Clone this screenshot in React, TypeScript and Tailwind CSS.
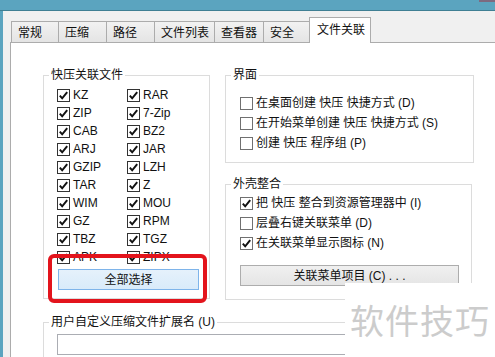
import React from 'react';

const FONT = { fontFamily: '"Liberation Sans", "Noto Sans CJK SC", sans-serif' };

const tabs = ['常规', '压缩', '路径', '文件列表', '查看器', '安全'];
const tabWidths = ['w-[47px]', 'w-[48px]', 'w-[48px]', 'w-[60px]', 'w-[49px]', 'w-[46px]'];

const leftTypes = ['KZ', 'ZIP', 'CAB', 'ARJ', 'GZIP', 'TAR', 'WIM', 'GZ', 'TBZ', 'APK'];
const rightTypes = ['RAR', '7-Zip', 'BZ2', 'JAR', 'LZH', 'Z', 'MOU', 'RPM', 'TGZ', 'ZIPX'];

function Box({ checked, light }: { checked?: boolean; light?: boolean }) {
  return (
    <svg width="13" height="13" viewBox="0 0 13 13" className="shrink-0">
      <rect x="0.5" y="0.5" width="12" height="12" fill="#fff" stroke={light ? '#707070' : '#333'} />
      {checked && <path d="M2.8 6.6 L5.2 9.3 L10.2 3.2" fill="none" stroke="#111" strokeWidth="2" />}
    </svg>
  );
}

function Row({ label, checked, light, wide }: { label: string; checked?: boolean; light?: boolean; wide?: boolean }) {
  return (
    <div className={`flex items-center gap-[3px] ${wide ? 'h-[20px]' : 'h-[18px]'}`}>
      <Box checked={checked} light={light} />
      <span className="text-[12px] text-[#111] whitespace-nowrap">{label}</span>
    </div>
  );
}

export default function App() {
  return (
    <div className="relative w-[495px] h-[357px] overflow-hidden bg-[#f0f0f0] text-[#111]" style={FONT}>
      {/* title bar */}
      <div className="h-[11px] bg-[#5ba4bf] border-b border-[#3f7f93] flex justify-end">
        <div className="w-[16px] h-[2px] bg-[#7d6a80]" />
      </div>

      <div className="flex">
        <div className="w-[3px] h-[346px] bg-[#5ba4bf]" />
        <div className="flex-1 pl-[7px] pt-[6px]">
          {/* tabs */}
          <div className="flex items-end h-[25px] pl-[1px]">
            {tabs.map((t, i) => (
              <div
                key={t}
                className={`${tabWidths[i]} h-[21px] border border-b-0 border-r-0 border-[#acacac] bg-gradient-to-b from-[#f2f2f2] to-[#e4e4e4] pl-[6px] pt-[2px] text-[12px] whitespace-nowrap`}
              >
                {t}
              </div>
            ))}
            <div className="relative z-10 -mb-[1px] w-[62px] h-[26px] border border-b-0 border-[#acacac] bg-white pl-[7px] pt-[3px] text-[12px]">
              文件关联
            </div>
          </div>

          {/* panel */}
          <div className="bg-white border-t border-l border-[#acacac] h-[320px] pl-[32px] pt-[24px] flex gap-[15px]">
            {/* left column */}
            <div className="flex flex-col w-[167px]">
              <fieldset className="border border-[#dcdcdc] pl-[5px]">
                <legend className="px-[2px] text-[12px] leading-[16px]">快压关联文件</legend>
                <div className="pl-[8px] pt-[3px]">
                  <div className="flex">
                    <div className="w-[70px]">
                      {leftTypes.map(t => <Row key={t} label={t} checked />)}
                    </div>
                    <div>
                      {rightTypes.map(t => <Row key={t} label={t} checked />)}
                    </div>
                  </div>
                  <button className="mt-[3px] mb-[8px] ml-[1px] w-[141px] h-[21px] border border-[#7eb4ea] bg-gradient-to-b from-[#e5f1fb] to-[#d9ebfa] text-[12px] text-[#111]">
                    全部选择
                  </button>
                </div>
              </fieldset>

              <fieldset className="mt-[15px] border border-[#dcdcdc] pl-[5px] w-[330px] h-[60px]">
                <legend className="px-[2px] text-[12px] leading-[16px]">用户自定义压缩文件扩展名 (U)</legend>
                <div className="pl-[8px] pt-[4px]">
                  <div className="w-[300px] h-[21px] border border-[#abadb3] bg-white" />
                </div>
              </fieldset>
            </div>

            {/* right column */}
            <div className="flex flex-col w-[249px]">
              <fieldset className="border border-[#dcdcdc] pl-[5px]">
                <legend className="px-[2px] text-[12px] leading-[16px]">界面</legend>
                <div className="pl-[9px] pt-[10px] pb-[9px]">
                  <Row label="在桌面创建 快压 快捷方式 (D)" light wide />
                  <Row label="在开始菜单创建 快压 快捷方式 (S)" light wide />
                  <Row label="创建 快压 程序组 (P)" light wide />
                </div>
              </fieldset>

              <fieldset className="mt-[13px] w-[247px] border border-[#dcdcdc] pl-[5px]">
                <legend className="px-[2px] text-[12px] leading-[16px]">外壳整合</legend>
                <div className="pl-[9px] pt-[1px] pb-[12px]">
                  <Row label="把 快压 整合到资源管理器中 (I)" checked light wide />
                  <Row label="层叠右键关联菜单 (D)" light wide />
                  <Row label="在关联菜单显示图标 (N)" checked light wide />
                  <button className="mt-[12px] w-[219px] h-[21px] border border-[#adadad] bg-gradient-to-b from-[#f0f0f0] to-[#e5e5e5] text-[12px] text-[#111]">
                    关联菜单项目 (C) . . .
                  </button>
                </div>
              </fieldset>
            </div>
          </div>
        </div>
      </div>

      {/* highlight around select-all button */}
      <div className="absolute left-[48px] top-[254px] w-[159px] h-[49px] border-[4px] border-[#e3141c] rounded-[6px]" />

      {/* watermark */}
      <div className="absolute left-[345px] top-[283px] w-[150px] h-[74px] bg-white flex items-center justify-center">
        <span className="text-[34px] text-[#cccccc] tracking-[1px] leading-none" style={{ fontFamily: '"Noto Sans CJK SC", sans-serif' }}>
          软件技巧
        </span>
      </div>
    </div>
  );
}
